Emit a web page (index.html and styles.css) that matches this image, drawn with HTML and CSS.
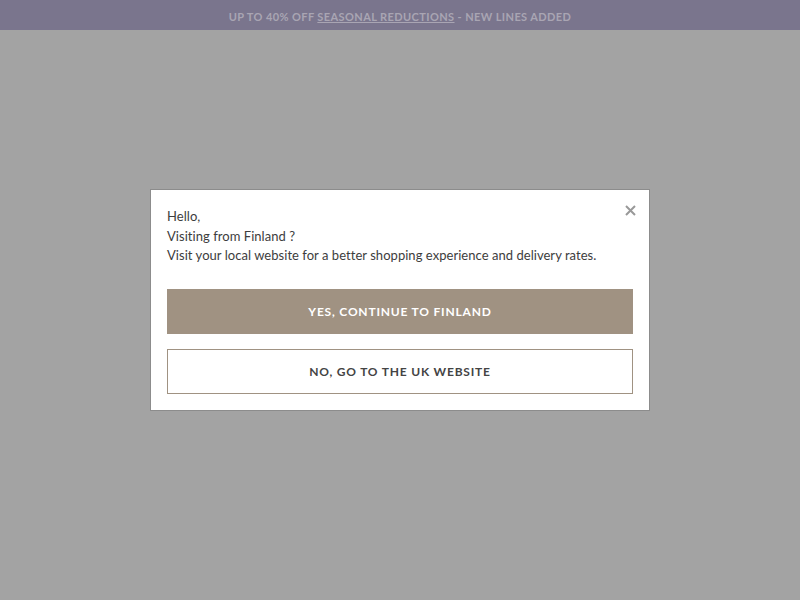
FILE: index.html
```html
<!DOCTYPE html>
<html lang="en">
<head>
  <meta name="viewport" content="width=device-width, initial-scale=1.0" />
  <title>Choose your website</title>
  <link rel="stylesheet" href="styles.css">
</head>
<body>

  <div class="promo-bar">
    UP TO 40% OFF <a href="#">SEASONAL REDUCTIONS</a> - NEW LINES ADDED
  </div>

  <div class="overlay">
    <div class="geo-modal">
      <button class="close-btn" type="button" aria-label="Close">
        <svg width="11" height="11" viewBox="0 0 11 11">
          <path d="M1 1 L10 10 M10 1 L1 10" stroke="#999" stroke-width="2" />
        </svg>
      </button>
      <p class="geo-text">
        Hello,<br>
        Visiting from Finland ?<br>
        Visit your local website for a better shopping experience and delivery rates.
      </p>
      <button class="btn btn-primary" type="button">YES, CONTINUE TO FINLAND</button>
      <button class="btn btn-outline" type="button">NO, GO TO THE UK WEBSITE</button>
    </div>
  </div>

</body>
</html>
```

FILE: styles.css
```css
body {
  margin: 0;
  font-family: Lato, "Open Sans", sans-serif;
  background: #a3a3a3;
  height: 600px;
  overflow: hidden;
}

.promo-bar {
  height: 30px;
  line-height: 33px;
  background: #7a758d;
  color: #a9a5b3;
  font-size: 11px;
  font-weight: bold;
  letter-spacing: 0.4px;
  text-align: center;
}

.promo-bar a {
  color: #a9a5b3;
  text-decoration: underline;
}

.overlay {
  display: flex;
  justify-content: center;
  padding-top: 159px;
}

.geo-modal {
  position: relative;
  width: 466px;
  background: #fff;
  border: 1px solid #8c8c8c;
  padding: 17px 16px 16px;
}

.close-btn {
  position: absolute;
  top: 14px;
  right: 13px;
  background: none;
  border: none;
  padding: 0;
  cursor: pointer;
}

.geo-text {
  margin: 0 0 23px;
  font-size: 13px;
  line-height: 19.5px;
  letter-spacing: 0.04px;
  color: #3d3d3d;
}

.btn {
  display: block;
  width: 100%;
  height: 45px;
  font-family: Lato, sans-serif;
  font-size: 12px;
  font-weight: bold;
  letter-spacing: 0.8px;
  cursor: pointer;
}

.btn-primary {
  background: #a09282;
  border: none;
  color: #fff;
  margin-bottom: 15px;
}

.btn-outline {
  background: #fff;
  border: 1px solid #a09282;
  color: #444;
}
```
